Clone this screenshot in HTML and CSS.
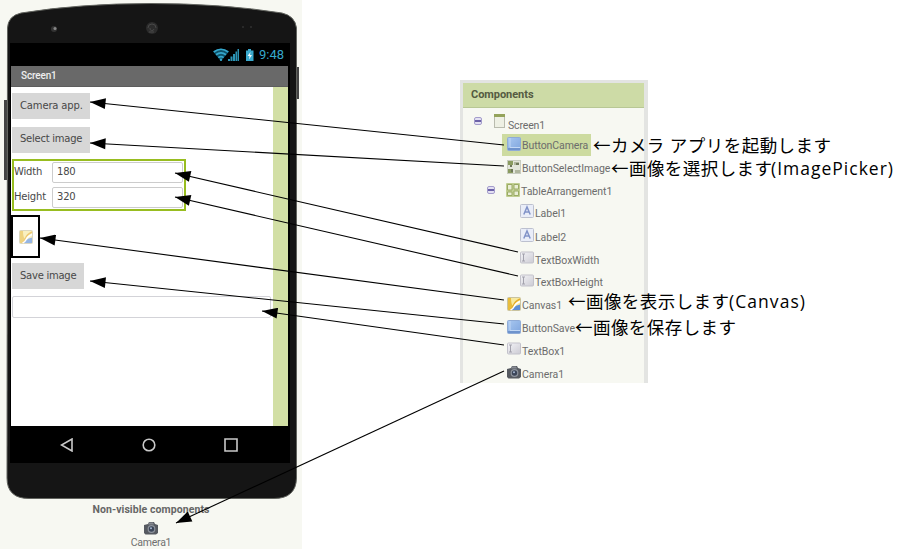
FILE: index.html
```html
<!DOCTYPE html>
<html lang="ja">
<head>
<meta charset="utf-8">
<title>Components</title>
<link rel="stylesheet" href="styles.css">
</head>
<body>
<svg class="defs" width="0" height="0" aria-hidden="true">
  <defs>
    <linearGradient id="blue" x1="0" y1="0" x2="1" y2="1"><stop offset="0" stop-color="#a9c8f0"/><stop offset="1" stop-color="#7ea5de"/></linearGradient>
    <linearGradient id="grey" x1="0" y1="0" x2="1" y2="1"><stop offset="0" stop-color="#f4f4f7"/><stop offset="1" stop-color="#cccbd4"/></linearGradient>
    <symbol id="i-screen" viewBox="0 0 14 14"><rect x="1.500" y=".5" width="10" height="13" fill="#eef0e4" stroke="#b9bbae"/><path d="M1 0h11v3H1z" fill="#94a35b"/></symbol>
    <symbol id="i-button" viewBox="0 0 14 14"><rect x=".5" y=".5" width="13" height="13" rx="1" fill="url(#blue)" stroke="#8fabd6"/><path d="M3 1v9.500h10" fill="none" stroke="#c2d8f5"/><path d="M1 11h12v2H1z" fill="#6e93cd"/></symbol>
    <symbol id="i-picker" viewBox="0 0 14 14"><rect x=".5" y=".5" width="13" height="13" fill="#e2e5da" stroke="#c8ccc0"/><path d="M1 1h5v4H1zM1 9h5v4H1z" fill="#8a9b60"/><path d="M7 2h5v3H7zM8 10h5v3H8z" fill="#b0b69e"/><path d="M9 3h3v2H9zM3 5h2v2H3zM4 9h2v3H4z" fill="#6d7659"/></symbol>
    <symbol id="i-table" viewBox="0 0 14 14"><rect width="14" height="14" rx="1" fill="#c1cf92"/><path d="M1.500 1.500H6V7H1.500zM8 1.500h4.500V6H8zM1.500 9H6v3.500H1.500zM8 8h4.500v4.500H8z" fill="#e9eed5" stroke="#9aaa64"/></symbol>
    <symbol id="i-label" viewBox="0 0 14 14"><rect x=".5" y=".5" width="13" height="13" rx="1" fill="#e9edf8" stroke="#bcc0cf"/><path d="M3.800 10.500L7 3l3.200 7.500M5 8h4" fill="none" stroke="#8193c8" stroke-width="1.500"/></symbol>
    <symbol id="i-text" viewBox="0 0 14 14"><rect x=".5" y="1" width="13" height="11" rx="1" fill="url(#grey)" stroke="#c3c2cb"/><path d="M2 3h3M3.500 3v7M2 10h3" fill="none" stroke="#a3a2ad"/></symbol>
    <symbol id="i-canvas" viewBox="0 0 14 14"><rect x=".5" y=".5" width="13" height="13" rx="1" fill="#f6e9a0" stroke="#c9c3a0"/><path d="M4 13C7 12 6 9 13 7.500V13z" fill="#5e8fd6"/><path d="M1 1h3c0 5 1 8 3 8l-4 4H1z" fill="#e8bd3d"/><path d="M3 13C8 11 4 6 13 2" fill="none" stroke="#e5ad28" stroke-width="1.500"/><path d="M3.500 13C9 11 5 7.500 13 4.500" fill="none" stroke="#fff" stroke-width="1.500"/></symbol>
    <symbol id="i-camera" viewBox="0 0 14 14"><path d="M0 4l4-1 1-2h5l1 2 3 1v8l-2 1.500H1.500L0 12z" fill="#565a61"/><path d="M5 1.500h4l1 2H4z" fill="#878b93"/><circle cx="7.500" cy="8" r="3.900" fill="#8d939d"/><circle cx="7.500" cy="8" r="2.700" fill="#3b4558"/><circle cx="7" cy="7.300" r="1" fill="#a5b8d4"/></symbol>
  </defs>
</svg>
<main class="board">
  <section class="viewer">
    <div class="phone">
      <svg class="shell" width="302" height="500" viewBox="0 0 302 500" aria-hidden="true">
        <path d="M4 100h3v80H4zM297 67h2v32h-2z" fill="#444"/>
        <path d="M7.500 28Q8 16 21 13Q80 3.500 151 3.500T282 13Q295 16 296.500 28V478Q296 498.500 274 498.500H29Q7 498.500 7 478Z" fill="#151515" stroke="#62645f"/>
        <path d="M10 43h280v420H10z" fill="#000"/>
        <circle cx="54" cy="29" r="3" fill="#333"/><circle cx="55" cy="28.500" r="1.500" fill="#888"/>
        <circle cx="152" cy="28" r="6" fill="#2c2c2c"/><path d="M148 28a4 4 0 0 1 8 0m-6 0a2 2 0 0 0 4 1m-5 3h5" fill="none" stroke="#484848"/>
        <path d="M242 27h2M250 27h2" stroke="#292929" stroke-width="2"/>
      </svg>
      <div class="status">
        <svg width="41" height="14" viewBox="0 0 41 14" aria-hidden="true"><path d="M0 3.500Q8 -2 16 3.500L8 13z" fill="#0d5168"/><path d="M.8 4Q8 -1.500 15.200 4M3 6.800Q8 3 13 6.800M5.300 9.600Q8 7.600 10.700 9.600" fill="none" stroke="#35a7cc" stroke-width="1.700"/><circle cx="8" cy="11.800" r="1.200" fill="#35a7cc"/><path d="M15 13v-2h2v2zm2.500 0V8.500h2V13zm2.500 0V6h2v7zm2.500 0V3.500h1.500V13zm2 0V1H26v12z" fill="#2c94b5"/><path d="M33 2.500h2V1h3v1.500h2.500V13H33z" fill="#3aa9cd"/><path d="M37.500 4l-3 4h2l-.5 3.500 3-4.500h-2z" fill="#eaf8fc"/></svg>
        <span>9:48</span>
      </div>
      <div class="titlebar">Screen1</div>
      <div class="app">
        <div class="button">Camera app.</div>
        <div class="button second">Select image</div>
        <div class="table">
          <span>Width</span><div class="input">180</div>
          <span>Height</span><div class="input">320</div>
        </div>
        <div class="canvas"><svg class="icon faded"><use href="#i-canvas"/></svg></div>
        <div class="button save">Save image</div>
        <div class="input wide"></div>
      </div>
      <div class="nav">
        <svg viewBox="0 0 14 14"><path d="M12 1v12L1.500 7z"/></svg>
        <svg viewBox="0 0 14 14"><circle cx="7" cy="7" r="5.800"/></svg>
        <svg viewBox="0 0 14 14"><path d="M1 1h12v12H1z"/></svg>
      </div>
    </div>
    <div class="hidden-parts">
      <strong>Non-visible components</strong>
      <svg class="icon"><use href="#i-camera"/></svg>
      <span>Camera1</span>
    </div>
  </section>
  <section class="components">
    <h2>Components</h2>
    <ul>
      <li class="root"><i class="toggle"></i><svg class="icon"><use href="#i-screen"/></svg><span>Screen1</span></li>
      <li class="selected"><div><svg class="icon"><use href="#i-button"/></svg><span>ButtonCamera</span></div></li>
      <li><svg class="icon"><use href="#i-picker"/></svg><span>ButtonSelectImage</span></li>
      <li class="branch"><i class="toggle"></i><svg class="icon"><use href="#i-table"/></svg><span>TableArrangement1</span></li>
      <li class="leaf first"><svg class="icon"><use href="#i-label"/></svg><span>Label1</span></li>
      <li class="leaf"><svg class="icon"><use href="#i-label"/></svg><span>Label2</span></li>
      <li class="leaf"><svg class="icon"><use href="#i-text"/></svg><span>TextBoxWidth</span></li>
      <li class="leaf"><svg class="icon"><use href="#i-text"/></svg><span>TextBoxHeight</span></li>
      <li><svg class="icon"><use href="#i-canvas"/></svg><span>Canvas1</span></li>
      <li><svg class="icon"><use href="#i-button"/></svg><span>ButtonSave</span></li>
      <li><svg class="icon"><use href="#i-text"/></svg><span>TextBox1</span></li>
      <li><svg class="icon"><use href="#i-camera"/></svg><span>Camera1</span></li>
    </ul>
  </section>
  <svg class="overlay" width="910" height="549" viewBox="0 0 910 549">
    <defs><marker id="head" markerUnits="userSpaceOnUse" markerWidth="16" markerHeight="12" refX="0" refY="5.500" orient="auto"><path d="M0 5.500L15.500 0v11z"/></marker></defs>
    <g class="arrows">
      <path d="M90 102L504 145"/>
      <path d="M90 143L504 166"/>
      <path d="M175 173L518 252"/>
      <path d="M175 197L518 276"/>
      <path d="M40 238L504 300"/>
      <path d="M90 281L504 324"/>
      <path d="M262 311L504 345"/>
      <path d="M176 523L504 371"/>
    </g>
    <g class="notes">
      <text x="593" y="152" textLength="238">←カメラ アプリを起動します</text>
      <text x="611" y="175" textLength="161">←画像を選択します</text><text x="771" y="175" textLength="122">(ImagePicker)</text>
      <text x="568" y="308" textLength="161">←画像を表示します</text><text x="729" y="308" textLength="76">(Canvas)</text>
      <text x="575" y="334" textLength="161">←画像を保存します</text>
    </g>
  </svg>
</main>
</body>
</html>
```
FILE: styles.css
```css
* { box-sizing: border-box; }
body { margin: 0; background: #fff; font-family: Roboto, sans-serif; }
.defs { position: absolute; }
.board { position: relative; display: flex; align-items: flex-start; width: 910px; height: 549px; overflow: hidden; }
.icon { display: block; flex: none; width: 14px; height: 14px; }

.viewer { width: 302px; height: 549px; background: #f7f8f2; }
.phone { position: relative; isolation: isolate; height: 500px; padding: 43px 14px 0 11px; }
.shell { position: absolute; inset: 0; z-index: -1; }
.status { display: flex; justify-content: flex-end; align-items: center; gap: 5px; height: 23px; padding-right: 4px; color: #35a7cc; font-size: 13px; }
.titlebar { height: 21px; padding: 1px 0 0 10px; line-height: 17px; background: #696969; border-bottom: 1px solid #5d5d5d; color: #eee; font-size: 10px; font-weight: 500; letter-spacing: -.15px; }
.app { display: flex; flex-direction: column; align-items: flex-start; height: 339px; padding: 6px 0 0 1px; background: #fff; border-right: 15px solid #d2dfa5; color: #484848; font: 10px "DejaVu Sans", sans-serif; }
.button { width: 78px; height: 26px; padding-left: 8px; line-height: 26px; letter-spacing: -.25px; background: #d7d7d7; white-space: nowrap; }
.button:first-child { letter-spacing: -.15px; }
.button.second { margin-top: 8px; line-height: 24px; letter-spacing: -.25px; }
.button.save { width: 72px; margin-top: 5px; line-height: 26px; }
.table { display: grid; grid-template-columns: 38px 131px; grid-template-rows: 21px 21px; row-gap: 4px; width: 174px; height: 52px; margin-top: 6px; padding: 1px 0 0; border: 2px solid #98bd20; line-height: 20px; letter-spacing: -.2px; }
.input { height: 21px; padding-left: 4px; line-height: 18px; background: #fff; border: 1px solid #ccc; border-radius: 2px; }
.input.wide { width: 259px; height: 22px; margin-top: 7px; border-color: #d3d3d8; }
.canvas { display: flex; align-items: center; justify-content: center; width: 29px; height: 43px; margin: 4px 0 0 -1px; border: 2px solid #000; }
.faded { opacity: .65; }
.nav { display: flex; justify-content: center; gap: 68px; height: 37px; padding: 12px 2px 0 0; }
.nav svg { width: 14px; height: 14px; fill: none; stroke: #c9c9c9; stroke-width: 1.6; }
.hidden-parts { display: flex; flex-direction: column; align-items: center; height: 49px; padding-top: 3px; color: #707070; font-size: 10.5px; line-height: 13px; }
.hidden-parts strong { font-weight: 700; color: #666; letter-spacing: .08px; }
.hidden-parts .icon { margin-top: 5px; }
.hidden-parts span { margin-top: 1px; letter-spacing: -.25px; }

.components { width: 188px; height: 303px; margin: 80px 0 0 158px; border: solid #e3e4e2; border-width: 3px 4px 0 3px; background: #f7f8f2; }
.components h2 { height: 25px; margin: 0; padding-left: 8px; background: #cddba6; border-bottom: 1px solid #b8c795; color: #555b42; font-size: 11px; font-weight: 700; letter-spacing: -.05px; line-height: 24px; }
.components ul { margin: 2px 0 0; padding: 0; list-style: none; color: #6c6c6c; font-size: 10.5px; }
.components li { display: flex; align-items: center; gap: 1px; height: 22.8px; padding-left: 44px; white-space: nowrap; }
.components li span { padding-top: 5px; line-height: 14px; letter-spacing: -.04px; }
.components li.leaf { padding-left: 57px; }
.components li.leaf.first span { padding-top: 2px; }
.components li.first .icon { margin-top: -3px; }
.components li.root { padding-left: 11px; }
.components li.root span { padding-top: 9px; letter-spacing: -.15px; }
.components li.branch { padding-left: 24px; }
.components li.selected { padding-left: 39px; }
.selected div { display: flex; align-items: center; gap: 1px; width: 89px; height: 22px; margin-top: 2px; padding-left: 5px; background: #cddba0; }
.components .selected span { padding-top: 2px; letter-spacing: -.1px; }
.selected .icon { margin-top: -2px; }
.toggle { width: 8px; height: 8px; border: 1px solid #a49dcc; border-radius: 2px; background: linear-gradient(#e3e0f2 2px, #6c62a8 2px, #6c62a8 4px, #e3e0f2 4px); }
.root .toggle, .branch .toggle { margin-right: 10px; }

.overlay { position: absolute; inset: 0; }
.arrows path { stroke: #000; stroke-width: 1.1; marker-start: url(#head); }
.notes { fill: #000; font: 17.5px "Open Sans", "Noto Sans CJK JP", sans-serif; }
```
